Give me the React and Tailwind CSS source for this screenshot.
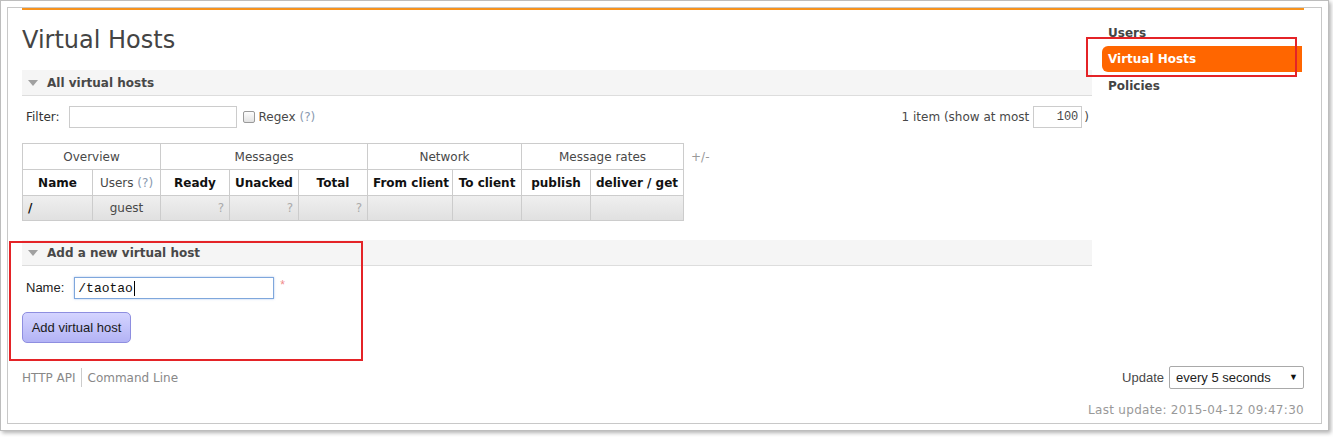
import React from "react";

const cols = [70, 68, 69, 69, 69, 85, 69, 69, 93];

function SectionHeader({ title }) {
  return (
    <div className="flex h-[26px] items-center border-b border-[#dddddd] bg-[#f5f5f5] pl-[6px]">
      <svg width="10" height="6" viewBox="0 0 10 6" className="mr-[9px]">
        <polygon points="0,0 10,0 5,6" fill="#a0a0a0" />
      </svg>
      <span className="text-[12px] font-bold text-[#484848]">{title}</span>
    </div>
  );
}

function VhostTable() {
  const cell = "border border-[#cccccc] px-[5px]";
  return (
    <div className="flex items-start">
      <table className="w-[661px] table-fixed border-collapse text-[12px]">
        <colgroup>
          {cols.map((w, i) => (
            <col key={i} style={{ width: w }} />
          ))}
        </colgroup>
        <thead>
          <tr className="h-[26px] text-[#484848]">
            <th colSpan={2} className={`${cell} font-normal`}>Overview</th>
            <th colSpan={3} className={`${cell} font-normal`}>Messages</th>
            <th colSpan={2} className={`${cell} font-normal`}>Network</th>
            <th colSpan={2} className={`${cell} font-normal`}>Message rates</th>
          </tr>
          <tr className="h-[26px] text-[#111111]">
            <th className={`${cell} font-bold`}>Name</th>
            <th className={`${cell} font-normal text-[#484848]`}>
              Users <span className="text-[#8a9ab0]">(?)</span>
            </th>
            <th className={`${cell} font-bold`}>Ready</th>
            <th className={`${cell} font-bold`}>Unacked</th>
            <th className={`${cell} font-bold`}>Total</th>
            <th className={`${cell} whitespace-nowrap px-0 font-bold`}>From client</th>
            <th className={`${cell} whitespace-nowrap px-0 font-bold`}>To client</th>
            <th className={`${cell} font-bold`}>publish</th>
            <th className={`${cell} whitespace-nowrap px-0 font-bold`}>deliver / get</th>
          </tr>
        </thead>
        <tbody>
          <tr className="h-[25px] bg-[linear-gradient(#efefef,#e0e0e0)] text-[#484848]">
            <td className={`${cell} font-bold text-[#111111]`}>/</td>
            <td className={`${cell} text-center`}>guest</td>
            <td className={`${cell} text-right text-[#aaaaaa]`}>?</td>
            <td className={`${cell} text-right text-[#aaaaaa]`}>?</td>
            <td className={`${cell} text-right text-[#aaaaaa]`}>?</td>
            <td className={cell}></td>
            <td className={cell}></td>
            <td className={cell}></td>
            <td className={cell}></td>
          </tr>
        </tbody>
      </table>
      <span className="ml-[7px] mt-[5px] text-[12px] text-[#999999]">+/-</span>
    </div>
  );
}

export default function App() {
  return (
    <div
      className="relative h-[437px] w-[1333px] overflow-hidden bg-white text-[12px] text-[#484848]"
      style={{ fontFamily: '"DejaVu Sans", Verdana, sans-serif' }}
    >
      {/* window frame */}
      <div className="h-[431px] w-[1329px] border border-[#bdbdbd] bg-white p-[6px] shadow-[2px_2px_4px_rgba(0,0,0,0.3)]">
        <div className="flex h-full flex-col border border-[#c8c8c8] pl-[14px] pr-[17px]">
          <div className="h-[2px] bg-[#f7931e]" />

          <div className="flex">
            {/* main */}
            <div className="w-[1070px]">
              <h1 className="mt-[15px] h-[30px] text-[24px] font-normal leading-[30px] text-[#444444]">
                Virtual Hosts
              </h1>

              <div className="mt-[15px]">
                <SectionHeader title="All virtual hosts" />
              </div>

              <div className="mt-[10px] flex h-[22px] items-center justify-between pl-[4px] pr-[3px]">
                <div className="flex items-center">
                  <span className="text-[#333333]">Filter:</span>
                  <input className="ml-[9px] h-[22px] w-[168px] border border-[#cccccc] outline-none" />
                  <span className="ml-[6px] h-[12px] w-[12px] rounded-[2px] border border-[#9a9a9a] bg-[linear-gradient(#fdfdfd,#e2e2e2)]" />
                  <span className="ml-[4px] text-[#484848]">
                    Regex <span className="text-[#8a9ab0]">(?)</span>
                  </span>
                </div>
                <div className="flex items-center">
                  <span>1 item (show at most</span>
                  <input
                    readOnly
                    value="100"
                    className="ml-[4px] h-[22px] w-[49px] border border-[#cccccc] pr-[3px] text-right text-[12px] outline-none"
                    style={{ fontFamily: '"Liberation Mono", monospace' }}
                  />
                  <span className="ml-[2px]">)</span>
                </div>
              </div>

              <div className="mt-[15px]">
                <VhostTable />
              </div>

              <div className="mt-[19px]">
                <SectionHeader title="Add a new virtual host" />
              </div>

              <div
                className="mt-[11px] flex h-[22px] items-center pl-[4px]"
                style={{ fontFamily: '"Liberation Sans", Arial, sans-serif' }}
              >
                <span className="text-[13px] text-[#222222]">Name:</span>
                <div className="relative ml-[10px]">
                  <input
                    readOnly
                    value="/taotao"
                    className="h-[22px] w-[200px] border border-[#7fa7dc] px-[3px] text-[13px] text-[#111111] shadow-[0_0_2px_rgba(90,140,220,0.5)] outline-none"
                    style={{ fontFamily: '"Liberation Mono", monospace' }}
                  />
                  <span className="absolute left-[60px] top-[4px] h-[15px] w-[1px] bg-black" />
                </div>
                <span className="ml-[6px] mb-[6px] text-[12px] text-[#f08a8a]">*</span>
              </div>

              <button
                className="mt-[13px] h-[31px] w-[109px] rounded-[5px] border border-[#8e8ee0] bg-[linear-gradient(#d4d4ff,#b3b3f5)] text-[13px] text-[#1a1a1a]"
                style={{ fontFamily: '"Liberation Sans", Arial, sans-serif' }}
              >
                Add virtual host
              </button>
            </div>

            {/* sidebar */}
            <div className="ml-[10px] mt-[10px] w-[200px] text-[12px] font-bold">
              <div className="flex h-[26px] items-center pl-[6px] text-[#444444]">Users</div>
              <div className="flex h-[26px] items-center rounded-l-[6px] bg-[#ff6600] pl-[6px] text-white">
                Virtual Hosts
              </div>
              <div className="mt-[1px] flex h-[26px] items-center pl-[6px] text-[#444444]">Policies</div>
            </div>
          </div>

          {/* footer */}
          <div className="mt-[23px] flex h-[23px] items-center justify-between">
            <div className="flex items-center text-[#888888]">
              <span className="pr-[5px]">HTTP API</span>
              <span className="flex h-[19px] items-center border-l border-[#cccccc] pl-[6px]">Command Line</span>
            </div>
            <div
              className="flex items-center"
              style={{ fontFamily: '"Liberation Sans", Arial, sans-serif' }}
            >
              <span className="text-[13px] text-[#484848]">Update</span>
              <div className="relative ml-[5px]">
                <select
                  defaultValue="5"
                  className="h-[23px] w-[135px] appearance-none rounded-[2px] border border-[#a9a9a9] bg-white pl-[6px] text-[13px] text-[#222222] outline-none"
                >
                  <option value="5">every 5 seconds</option>
                  <option value="10">every 10 seconds</option>
                  <option value="30">every 30 seconds</option>
                </select>
                <span className="pointer-events-none absolute right-[6px] top-[5px] text-[9px] text-[#111111]">▼</span>
              </div>
            </div>
          </div>

          <div className="mt-[13px] h-[16px] text-right leading-[16px] tracking-[0.3px] text-[#999999]">
            Last update: 2015-04-12 09:47:30
          </div>
        </div>
      </div>

      {/* annotation boxes */}
      <div className="pointer-events-none absolute left-[9px] top-[241px] h-[120px] w-[354px] border-2 border-[#e42327]" />
      <div className="pointer-events-none absolute left-[1086px] top-[37px] h-[40px] w-[211px] border-2 border-[#e42327]" />
    </div>
  );
}
